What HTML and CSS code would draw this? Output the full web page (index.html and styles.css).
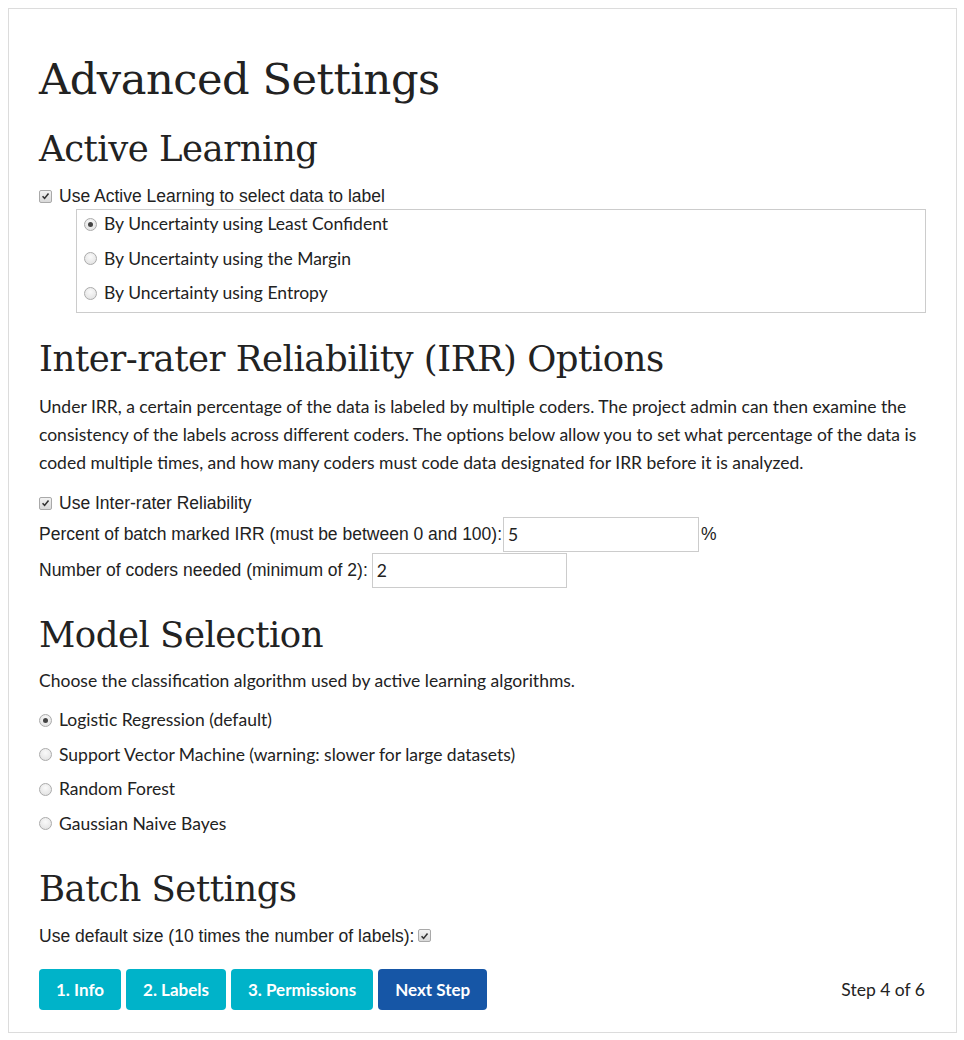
FILE: index.html
```html
<!DOCTYPE html>
<html>
<head>
<meta charset="utf-8">
<link rel="stylesheet" href="styles.css">
</head>
<body>
<div class="page">
  <h1 class="title">Advanced Settings</h1>

  <h2 class="section section-al">Active Learning</h2>
  <div class="check-row row-al">
    <span class="cb"><svg viewBox="0 0 12 12" width="12" height="12"><path d="M2.8 6.3 L5 8.6 L9.3 3.2" fill="none" stroke="#333" stroke-width="1.7"/></svg></span>
    <span class="arial">Use Active Learning to select data to label</span>
  </div>
  <div class="radio-box">
    <div class="radio-row"><span class="rb on"></span><span>By Uncertainty using Least Confident</span></div>
    <div class="radio-row"><span class="rb"></span><span>By Uncertainty using the Margin</span></div>
    <div class="radio-row"><span class="rb"></span><span>By Uncertainty using Entropy</span></div>
  </div>

  <h2 class="section section-irr">Inter-rater Reliability (IRR) Options</h2>
  <p class="desc">Under IRR, a certain percentage of the data is labeled by multiple coders. The project admin can then examine the consistency of the labels across different coders. The options below allow you to set what percentage of the data is coded multiple times, and how many coders must code data designated for IRR before it is analyzed.</p>
  <div class="check-row row-irr">
    <span class="cb"><svg viewBox="0 0 12 12" width="12" height="12"><path d="M2.8 6.3 L5 8.6 L9.3 3.2" fill="none" stroke="#333" stroke-width="1.7"/></svg></span>
    <span class="arial">Use Inter-rater Reliability</span>
  </div>
  <div class="field-row row-pct">
    <span class="arial">Percent of batch marked IRR (must be between 0 and 100):</span><input class="txt" type="text" value="5"><span class="arial">%</span>
  </div>
  <div class="field-row row-num">
    <span class="arial">Number of coders needed (minimum of 2):</span><input class="txt txt-num" type="text" value="2">
  </div>

  <h2 class="section section-model">Model Selection</h2>
  <p class="lead">Choose the classification algorithm used by active learning algorithms.</p>
  <div class="model-list">
    <div class="radio-row"><span class="rb on"></span><span>Logistic Regression (default)</span></div>
    <div class="radio-row"><span class="rb"></span><span>Support Vector Machine (warning: slower for large datasets)</span></div>
    <div class="radio-row"><span class="rb"></span><span>Random Forest</span></div>
    <div class="radio-row"><span class="rb"></span><span>Gaussian Naive Bayes</span></div>
  </div>

  <h2 class="section section-batch">Batch Settings</h2>
  <div class="check-row row-batch">
    <span class="arial">Use default size (10 times the number of labels):</span>
    <span class="cb cb-after"><svg viewBox="0 0 12 12" width="12" height="12"><path d="M2.8 6.3 L5 8.6 L9.3 3.2" fill="none" stroke="#333" stroke-width="1.7"/></svg></span>
  </div>

  <div class="footer">
    <div class="btns">
      <button class="btn btn-info">1. Info</button>
      <button class="btn btn-info">2. Labels</button>
      <button class="btn btn-info">3. Permissions</button>
      <button class="btn btn-primary">Next Step</button>
    </div>
    <div class="step">Step 4 of 6</div>
  </div>
</div>
</body>
</html>
```

FILE: styles.css
```css
html, body {
  margin: 0;
  padding: 0;
  background: #fff;
}
body {
  padding: 8px;
  font-family: "Lato", "Open Sans", sans-serif;
  font-size: 17.5px;
  color: #222;
}
.page {
  box-sizing: border-box;
  width: 949px;
  min-height: 1025px;
  border: 1px solid #dcdcdc;
  padding: 41px 30px 0 30px;
}
.title, .section {
  font-family: "DejaVu Serif", serif;
  font-weight: normal;
  color: #222;
  margin: 0;
  letter-spacing: -0.5px;
}
.title {
  font-size: 43.2px;
  line-height: 58px;
}
.section {
  font-size: 35.5px;
  line-height: 46px;
}
.section-al { margin-top: 18px; }
.section-irr { margin-top: 23px; }
.section-model { margin-top: 24px; }
.section-batch { margin-top: 30px; }

.arial {
  font-family: "Liberation Sans", Arial, sans-serif;
}
.check-row {
  display: flex;
  align-items: center;
  height: 24px;
  line-height: 24px;
}
.row-al { margin-top: 12px; }
.row-irr { margin-top: 14px; }
.row-batch { margin-top: 12px; }

.cb {
  box-sizing: border-box;
  width: 13px;
  height: 13px;
  border: 1px solid #a9a9a9;
  border-radius: 2px;
  background: linear-gradient(#f2f2f2, #d9d9d9);
  display: inline-flex;
  align-items: center;
  justify-content: center;
  margin-right: 7px;
  flex: none;
}
.cb svg { display: block; }
.cb-after { margin-left: 4px; margin-right: 0; }

.radio-box {
  margin: 1px 0 0 37px;
  border: 1px solid #ccc;
  padding: 2px 7px 7px 7px;
  display: flex;
  flex-direction: column;
  gap: 10.5px;
}
.radio-row {
  display: flex;
  align-items: center;
  height: 24px;
  line-height: 24px;
}
.rb {
  box-sizing: border-box;
  width: 13px;
  height: 13px;
  border-radius: 50%;
  border: 1px solid #ababab;
  background: radial-gradient(circle at 50% 35%, #fafafa, #dedede);
  margin-right: 7px;
  flex: none;
  display: inline-flex;
  align-items: center;
  justify-content: center;
}
.rb.on::after {
  content: "";
  width: 5px;
  height: 5px;
  border-radius: 50%;
  background: #444;
}

.desc {
  margin: 11px 0 0 0;
  line-height: 28px;
}
.field-row {
  display: flex;
  align-items: center;
  height: 35px;
}
.row-pct { margin-top: 2px; }
.row-num { margin-top: 1px; }
.txt {
  box-sizing: border-box;
  width: 196px;
  height: 35px;
  border: 1px solid #ccc;
  border-radius: 0;
  margin: 0 2px 0 1px;
  padding: 0 4px;
  font-family: "Lato", sans-serif;
  font-size: 17.5px;
  color: #222;
  outline: none;
}
.txt-num { margin-left: 4px; width: 195px; }

.lead {
  margin: 11px 0 0 0;
  line-height: 24px;
}
.model-list {
  margin-top: 15px;
  display: flex;
  flex-direction: column;
  gap: 10.5px;
}

.footer {
  margin-top: 21px;
  display: flex;
  justify-content: space-between;
  align-items: center;
}
.btns {
  display: flex;
  gap: 5px;
}
.btn {
  font-family: "Lato", sans-serif;
  font-weight: bold;
  font-size: 17px;
  color: #fff;
  border: none;
  border-radius: 4px;
  height: 41px;
  padding: 0 17px;
  cursor: pointer;
}
.btn-info { background: #00b3c9; }
.btn-primary { background: #1656a6; }
.step {
  font-size: 17.5px;
  margin-right: 1px;
}
```
